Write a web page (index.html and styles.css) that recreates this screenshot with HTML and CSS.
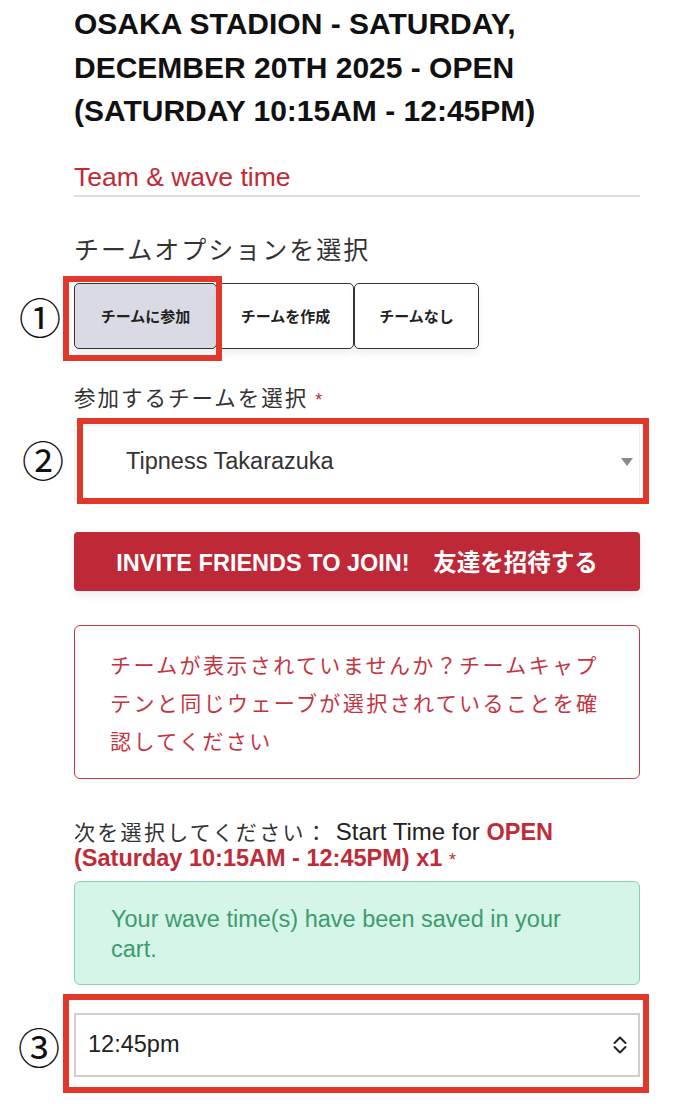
FILE: index.html
```html
<!DOCTYPE html>
<html lang="ja">
<head>
<meta charset="utf-8">
<link rel="stylesheet" href="styles.css">
</head>
<body>
<div class="page">
  <h1 class="title">OSAKA STADION - SATURDAY, DECEMBER 20TH 2025 - OPEN (SATURDAY 10:15AM - 12:45PM)</h1>
  <h2 class="section">Team &amp; wave time</h2>

  <div class="opt-label">チームオプションを選択</div>
  <div class="btn-group">
    <div class="opt-btn active">チームに参加</div>
    <div class="opt-btn">チームを作成</div>
    <div class="opt-btn last">チームなし</div>
  </div>

  <div class="field-label">参加するチームを選択 <span class="req">*</span></div>
  <div class="team-select">
    <span>Tipness Takarazuka</span>
    <svg class="tri" width="12" height="8" viewBox="0 0 12 8"><path d="M0 0 H12 L6 8 Z" fill="#8a8a8a"/></svg>
  </div>

  <div class="invite">INVITE FRIENDS TO JOIN!　友達を招待する</div>

  <div class="notice">チームが表示されていませんか？チームキャプテンと同じウェーブが選択されていることを確認してください</div>

  <div class="wave-label"><span class="jp">次を選択してください：</span> Start Time for <b>OPEN<br>(Saturday 10:15AM - 12:45PM) x1</b> <span class="req">*</span></div>

  <div class="saved">Your wave time(s) have been saved in your cart.</div>

  <div class="time-select">
    <span>12:45pm</span>
    <svg class="chev" width="16" height="22" viewBox="0 0 16 22"><path d="M2.5 9 L8 3.5 L13.5 9 M2.5 13 L8 18.5 L13.5 13" fill="none" stroke="#222" stroke-width="2" stroke-linecap="round" stroke-linejoin="round"/></svg>
  </div>

  <div class="mark mark1"></div>
  <div class="mark mark2"></div>
  <div class="mark mark3"></div>
  <div class="num num1">①</div>
  <div class="num num2">②</div>
  <div class="num num3">③</div>
</div>
</body>
</html>
```

FILE: styles.css
```css
* { box-sizing: border-box; }
html, body { margin: 0; padding: 0; background: #fff; }
body { font-family: "Liberation Sans", Arial, "Noto Sans CJK JP", sans-serif; color: #222; }

.page {
  position: relative;
  width: 686px;
  min-height: 1104px;
  padding: 2px 46px 20px 74px;
}

.title {
  margin: 0;
  font-size: 30px;
  line-height: 43.5px;
  font-weight: 700;
  color: #111;
  text-transform: uppercase;
}

.section {
  margin: 29px 0 0;
  font-size: 26.5px;
  line-height: 31px;
  font-weight: 400;
  color: #bf2b36;
  padding-bottom: 2px;
  border-bottom: 2px solid #dedede;
}

.opt-label {
  margin-top: 35px;
  font-family: "Noto Sans CJK JP", sans-serif;
  font-size: 25px;
  letter-spacing: 2px;
  line-height: 32px;
  color: #333;
}

.btn-group {
  display: flex;
  margin-top: 19px;
}

.opt-btn {
  height: 66px;
  display: flex;
  align-items: center;
  justify-content: center;
  font-family: "Noto Sans CJK JP", sans-serif;
  font-weight: 700;
  font-size: 15px;
  color: #222;
  background: #fff;
  border: 1.5px solid #333;
  border-radius: 5px;
  width: 137px;
  box-shadow: 0 5px 6px rgba(0,0,0,0.06);
}
.opt-btn.active { width: 143px; background: #d9dae3; }
.opt-btn.last { width: 125px; }

.field-label {
  margin-top: 34px;
  font-family: "Noto Sans CJK JP", sans-serif;
  font-size: 21.5px;
  letter-spacing: 2px;
  line-height: 28px;
  color: #333;
}
.req { color: #c0283a; font-family: "Liberation Sans", sans-serif; font-size: 18px; font-weight: 400; }

.team-select {
  margin-top: 11px;
  height: 74px;
  border: 1px solid #eee;
  display: flex;
  align-items: center;
  justify-content: space-between;
  padding: 0 6px 0 51px;
  font-size: 23.5px;
  color: #333;
}

.invite {
  margin-top: 33px;
  height: 59px;
  background: #bf2836;
  border-radius: 4px;
  color: #fff;
  font-weight: 700;
  font-size: 23.5px;
  display: flex;
  align-items: center;
  justify-content: center;
  box-shadow: 0 4px 8px rgba(0,0,0,0.08);
}

.notice {
  margin-top: 34px;
  border: 1.5px solid #c33a45;
  border-radius: 6px;
  padding: 19px 18px 19px 35px;
  font-family: "Noto Sans CJK JP", sans-serif;
  font-size: 21px;
  letter-spacing: 2.4px;
  line-height: 38px;
  color: #c4343f;
}

.wave-label {
  margin-top: 40px;
  font-size: 24px;
  line-height: 25px;
  color: #222;
}
.wave-label .jp { font-family: "Noto Sans CJK JP", sans-serif; font-size: 21px; letter-spacing: 2.3px; color: #333; }
.wave-label b { color: #bf2b36; font-size: 23.5px; }

.saved {
  margin-top: 8px;
  background: #d5f5e8;
  border: 1.5px solid #86d3ad;
  border-radius: 6px;
  padding: 22px 36px 20px 36px;
  font-size: 23.5px;
  line-height: 30px;
  color: #3d9c6e;
}

.time-select {
  margin-top: 28px;
  height: 64px;
  border: 2px solid #cfcfcf;
  display: flex;
  align-items: center;
  justify-content: space-between;
  padding: 0 10px 0 12px;
  font-size: 23.5px;
  color: #222;
}

.mark {
  position: absolute;
  border: 6px solid #e2382b;
}
.mark1 { left: 63px; top: 276px; width: 159px; height: 85px; }
.mark2 { left: 77px; top: 418px; width: 572px; height: 86px; }
.mark3 { left: 63px; top: 994px; width: 586px; height: 99px; }

.num {
  position: absolute;
  font-family: "Noto Sans CJK JP", sans-serif;
  font-size: 42px;
  line-height: 42px;
  color: #111;
}
.num1 { left: 19px; top: 295px; }
.num2 { left: 22px; top: 438px; }
.num3 { left: 18px; top: 1025px; }
```
